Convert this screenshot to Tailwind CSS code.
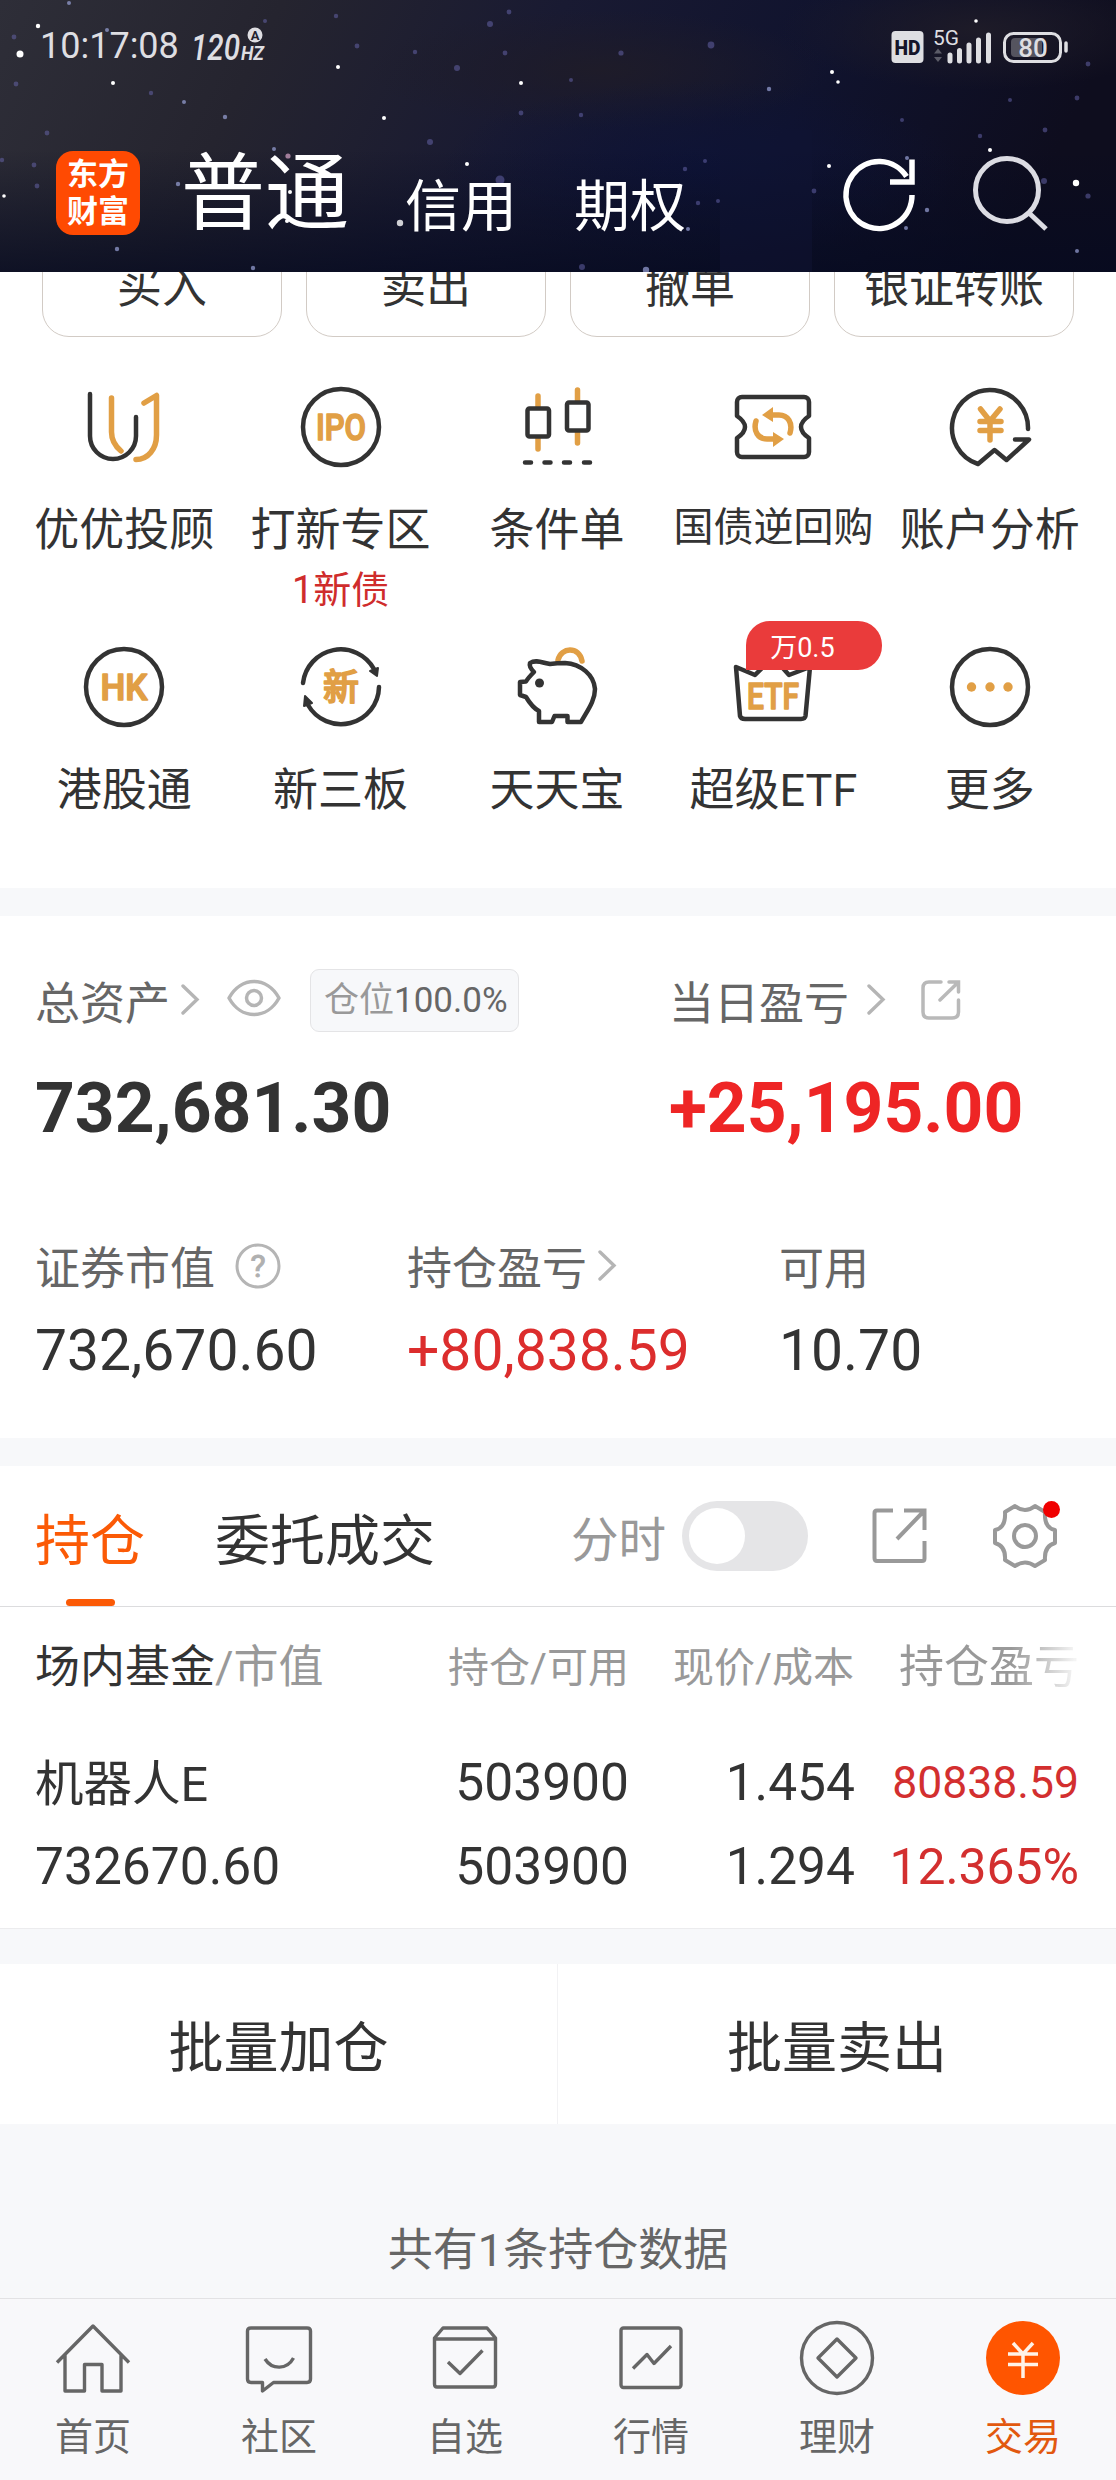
<!DOCTYPE html>
<html lang="zh-CN">
<head>
    <meta charset="UTF-8">
    <meta name="viewport" content="width=device-width, initial-scale=1.0">
    <title>交易 - 东方财富</title>
    <script src="https://cdn.jsdelivr.net/npm/@tailwindcss/browser@4"></script>
    <style>
        body { font-family: Roboto, 'Noto Sans CJK SC', sans-serif; }
        .icon { fill: none; stroke: #333; stroke-width: 4.5; stroke-linecap: round; stroke-linejoin: round; }
        .icon .o { stroke: #e19f45; stroke-width: 5.5; }
        .icon .of { fill: #e19f45; stroke: none; }
        .icon text { fill: #e19f45; stroke: #e19f45; stroke-width: 1.6; font-weight: 500; text-anchor: middle; }
        .nav { fill: none; stroke: #666; stroke-width: 3.4; stroke-linejoin: round; }
        .chev { fill: none; stroke: #b5b5b5; stroke-width: 3.4; stroke-linecap: round; }
    </style>
</head>
<body class="bg-[#f7f8fa] text-[#333] w-[1116px] h-[2480px] overflow-hidden whitespace-nowrap">

    <!-- Header -->
    <header class="relative h-[272px] overflow-hidden text-white bg-[#14152c]">
        <svg class="absolute inset-0" width="1116" height="272" viewBox="0 0 1116 272">
            <defs>
                <linearGradient id="sky" x1="0" y1="0" x2="1" y2="0.12">
                    <stop offset="0" stop-color="#2e2e38"/>
                    <stop offset="0.25" stop-color="#25242f"/>
                    <stop offset="0.5" stop-color="#191a32"/>
                    <stop offset="0.75" stop-color="#10132e"/>
                    <stop offset="1" stop-color="#0e0d1e"/>
                </linearGradient>
                <linearGradient id="shade" x1="0" y1="0" x2="0" y2="1">
                    <stop offset="0.55" stop-color="#060a20" stop-opacity="0"/>
                    <stop offset="1" stop-color="#060a20" stop-opacity="0.75"/>
                </linearGradient>
                <radialGradient id="blue"><stop offset="0" stop-color="#0d1338" stop-opacity="0.8"/><stop offset="1" stop-color="#0d1338" stop-opacity="0"/></radialGradient>
                <radialGradient id="dust"><stop offset="0" stop-color="#1f1c28" stop-opacity="0.9"/><stop offset="1" stop-color="#1f1c28" stop-opacity="0"/></radialGradient>
            </defs>
            <rect width="1116" height="272" fill="url(#sky)"/>
            <ellipse cx="600" cy="70" rx="230" ry="60" fill="url(#dust)"/>
            <ellipse cx="980" cy="30" rx="200" ry="60" fill="url(#dust)"/>
            <ellipse cx="700" cy="170" rx="260" ry="90" fill="url(#blue)"/>
            <rect width="1116" height="272" fill="url(#shade)"/>
            <rect x="720" y="130" width="92" height="142" fill="#111433" opacity="0.55"/>
            <g fill="#fff">
                <circle cx="20" cy="54" r="3.500"/><circle cx="38" cy="26" r="2.200"/><circle cx="113" cy="83" r="2"/>
                <circle cx="338" cy="67" r="2"/><circle cx="384" cy="118" r="2"/><circle cx="521" cy="83" r="2"/>
                <circle cx="467" cy="164" r="2"/><circle cx="400" cy="223" r="3.200" opacity="0.8"/><circle cx="4" cy="196" r="1.800"/>
                <circle cx="832" cy="72" r="2"/><circle cx="838" cy="82" r="1.800"/><circle cx="976" cy="21" r="1.800"/>
                <circle cx="990" cy="150" r="2"/><circle cx="1076" cy="183" r="3.200"/><circle cx="829" cy="166" r="2"/>
                <circle cx="290" cy="192" r="2"/><circle cx="287" cy="221" r="2"/>
            </g>
            <g fill="#9aa3d8" opacity="0.7">
                <circle cx="117" cy="249" r="2.200"/><circle cx="253" cy="268" r="2.200"/><circle cx="646" cy="270" r="3.200"/>
                <circle cx="769" cy="89" r="2.200"/><circle cx="927" cy="210" r="2.200"/><circle cx="1077" cy="251" r="2"/>
                <circle cx="184" cy="102" r="2"/><circle cx="225" cy="117" r="2.200"/><circle cx="107" cy="30" r="2"/>
                <circle cx="907" cy="158" r="2"/><circle cx="906" cy="228" r="2"/><circle cx="688" cy="229" r="2"/>
                <circle cx="69" cy="3" r="2"/><circle cx="274" cy="149" r="2"/><circle cx="178" cy="184" r="2.200"/>
                <circle cx="288" cy="156" r="2.600" fill="#d8a5c8"/>
            </g>
            <g fill="#6a68b0" opacity="0.5">
                <circle cx="500" cy="180" r="4.500"/><circle cx="490" cy="24" r="3"/><circle cx="509" cy="12" r="2.400"/>
                <circle cx="457" cy="68" r="3"/><circle cx="430" cy="142" r="3"/><circle cx="505" cy="53" r="2.400"/>
                <circle cx="415" cy="52" r="2.200"/><circle cx="357" cy="46" r="2.400"/><circle cx="336" cy="16" r="2.200"/>
                <circle cx="265" cy="21" r="2"/><circle cx="151" cy="93" r="2.200"/><circle cx="47" cy="133" r="2.400"/>
                <circle cx="16" cy="84" r="2.400"/><circle cx="14" cy="37" r="2.400"/><circle cx="34" cy="165" r="2.400"/>
                <circle cx="37" cy="186" r="2.400"/><circle cx="2" cy="160" r="2.200"/><circle cx="711" cy="45" r="3.400"/>
                <circle cx="621" cy="53" r="2.600"/><circle cx="571" cy="80" r="2"/><circle cx="581" cy="115" r="2.200"/>
                <circle cx="685" cy="169" r="2.200"/><circle cx="705" cy="161" r="2"/><circle cx="698" cy="203" r="2.200"/>
                <circle cx="718" cy="201" r="2"/><circle cx="814" cy="191" r="2.400"/><circle cx="1044" cy="181" r="3"/>
                <circle cx="1088" cy="196" r="2.600"/><circle cx="1088" cy="64" r="2.400"/><circle cx="1077" cy="98" r="2.400"/>
                <circle cx="1045" cy="130" r="2.400"/><circle cx="1010" cy="100" r="2"/><circle cx="902" cy="120" r="2"/>
                <circle cx="980" cy="136" r="2.200"/><circle cx="582" cy="267" r="3"/><circle cx="521" cy="113" r="2.400"/>
            </g>
        </svg>

        <div class="relative flex h-[92px] items-center pl-10 pr-[48px] text-[#dedee2]">
            <span class="text-[36px] leading-[50px]">10:17:08</span>
            <svg class="ml-[12px]" width="76" height="44" viewBox="0 0 76 44">
                <text x="0" y="35.500" font-size="37" font-style="italic" font-weight="500" textLength="49" lengthAdjust="spacingAndGlyphs" fill="#dedee2">120</text>
                <text x="50" y="35.500" font-size="20" font-style="italic" font-weight="700" textLength="23" lengthAdjust="spacingAndGlyphs" fill="#dedee2">HZ</text>
                <circle cx="64" cy="11" r="7.500" fill="#dedee2"/>
                <text x="64" y="15.500" font-size="13" font-weight="700" text-anchor="middle" fill="#22222e">A</text>
            </svg>
            <svg class="ml-auto" width="178" height="44" viewBox="0 0 178 44">
                <rect x="1.500" y="7" width="32" height="32" rx="4" fill="#dedee2"/>
                <text x="17.500" y="30.500" font-size="21" font-weight="900" text-anchor="middle" textLength="26" lengthAdjust="spacingAndGlyphs" fill="#15142a">HD</text>
                <text x="43" y="21" font-size="21" textLength="26" lengthAdjust="spacingAndGlyphs" fill="#dedee2">5G</text>
                <path d="M44 29.500l4-5 4 5zM44 33l4 5 4-5z" fill="#5c5c68"/>
                <path d="M60 31v6M69.500 26.500v10.500M79 21v16M88.500 16v21M98.500 11v26" stroke="#dedee2" stroke-width="5" stroke-linecap="round"/>
                <rect x="121" y="14" width="31" height="19" rx="4" fill="#55545f"/>
                <rect x="114.500" y="9.500" width="56" height="28" rx="9" fill="none" stroke="#dedee2" stroke-width="3"/>
                <path d="M176 19v8" stroke="#dedee2" stroke-width="3.500" stroke-linecap="round"/>
                <text x="143" y="32.500" font-size="26" font-weight="500" text-anchor="middle" fill="#dedee2">80</text>
            </svg>
        </div>

        <div class="relative flex h-[180px] items-center pl-14 pt-[22px]">
            <div class="w-[84px] h-[84px] rounded-[17px] bg-[#ff4a02] text-[31px] leading-[37px] font-bold text-center pt-[5px]">东方<br>财富</div>
            <span class="ml-[41px] pt-1 text-[84px] leading-[100px]">普通</span>
            <span class="ml-[56px] pt-7 text-[56px] leading-[70px]">信用</span>
            <span class="ml-[57px] pt-7 text-[56px] leading-[70px]">期权</span>
            <svg class="ml-[153px]" width="80" height="80" viewBox="-40 -40 80 80" fill="none" stroke="#fff" stroke-width="5.500">
                <path d="M33 2A33 33.500 0 1 1 27.500-16.500"/>
                <path d="M33-33.500V-11H11"/>
            </svg>
            <svg class="ml-[51px]" width="80" height="80" viewBox="-40 -40 80 80" fill="none" stroke="#dcdce3" stroke-width="5">
                <circle cx="-3" cy="-3" r="31.500"/>
                <path d="M19 20L36 36"/>
            </svg>
        </div>
    </header>

    <main>
        <!-- Quick trade buttons, scrolled partly under the header -->
        <div class="flex h-[65px] items-end gap-6 overflow-hidden bg-white px-[42px] text-center text-[45px] leading-[102px]">
            <div class="h-[101px] flex-1 rounded-[27px] border border-[#d2cbc5]">买入</div>
            <div class="h-[101px] flex-1 rounded-[27px] border border-[#d2cbc5]">卖出</div>
            <div class="h-[101px] flex-1 rounded-[27px] border border-[#d2cbc5]">撤单</div>
            <div class="h-[101px] flex-1 rounded-[27px] border border-[#d2cbc5]">银证转账</div>
        </div>

        <!-- Function grid -->
        <div class="grid h-[551px] grid-cols-5 auto-rows-[260px] bg-white pl-4 pr-[18px] pt-12 text-center text-[45px] leading-[60px]">
            <div class="flex flex-col items-center">
                <svg class="icon" width="84" height="84" viewBox="-42 -42 84 84">
                    <path class="o" d="M-12.500-29V5C-12.500 13-9 19-3 24"/>
                    <path class="o" d="M20-24L32.500-31.500V8C32.500 22 24 32.500 12 32.500"/>
                    <path d="M-34-33V9A23 23 0 0 0 12 9V-10"/>
                </svg>
                <span class="mt-8">优优投顾</span>
            </div>
            <div class="flex flex-col items-center">
                <svg class="icon" width="84" height="84" viewBox="-42 -42 84 84">
                    <circle r="38"/>
                    <text y="13" font-size="36" textLength="50" lengthAdjust="spacingAndGlyphs">IPO</text>
                </svg>
                <span class="mt-8">打新专区</span>
                <span class="-mt-px text-[38px] text-[#cf2c2c]">1新债</span>
            </div>
            <div class="flex flex-col items-center">
                <svg class="icon" width="84" height="84" viewBox="-42 -42 84 84">
                    <path class="o" d="M-19-31v11M-19 11v11M20.500-37v11M20.500 5v11"/>
                    <rect x="-29.500" y="-18.500" width="21.500" height="28" rx="2"/>
                    <rect x="10" y="-24.500" width="21.500" height="28" rx="2"/>
                    <path d="M-32 35.500h6M-12.500 35.500h6M7 35.500h6M27 35.500h6"/>
                </svg>
                <span class="mt-8">条件单</span>
            </div>
            <div class="flex flex-col items-center">
                <svg class="icon" width="84" height="84" viewBox="-42 -42 84 84">
                    <path d="M-31-30H31a5 5 0 0 1 5 5V-11C30-7 28-4 28 0S30 7 36 11V25a5 5 0 0 1-5 5H-31a5 5 0 0 1-5-5V11C-30 7-28 4-28 0S-30-7-36-11V-25a5 5 0 0 1 5-5Z"/>
                    <path class="o" d="M0-12H6C15-12 20-4 17 6M0 12H-6C-15 12-20 4-17-6"/>
                    <path class="of" d="M-11-12L0-20V-5ZM11 12L0 20V5Z"/>
                </svg>
                <span class="mt-8 text-[40px] leading-[53px]">国债逆回购</span>
            </div>
            <div class="flex flex-col items-center">
                <svg class="icon" width="84" height="84" viewBox="-42 -42 84 84">
                    <path d="M38 2A38 38 0 1 0-12 37L4.500 23L16.500 33L39 12.500H25"/>
                    <path class="o" d="M-9.500-18L0-6L10-18M0-6V13M-10-5.500H11M-10 3.500H11" stroke-width="4.500"/>
                </svg>
                <span class="mt-8">账户分析</span>
            </div>
            <div class="flex flex-col items-center">
                <svg class="icon" width="84" height="84" viewBox="-42 -42 84 84">
                    <circle r="38"/>
                    <text y="13" font-size="36" textLength="47" lengthAdjust="spacingAndGlyphs">HK</text>
                </svg>
                <span class="mt-8">港股通</span>
            </div>
            <div class="flex flex-col items-center">
                <svg class="icon" width="84" height="84" viewBox="-42 -42 84 84">
                    <path d="M-38-4A38 38 0 0 1 33-18M38 0A38 38 0 0 1-33 18"/>
                    <path d="M29-16L37-19L36-11ZM-29 16L-37 19L-36 9Z" fill="#333" stroke-width="2"/>
                    <text y="13" font-size="36">新</text>
                </svg>
                <span class="mt-8">新三板</span>
            </div>
            <div class="flex flex-col items-center">
                <svg class="icon" width="84" height="84" viewBox="-42 -42 84 84">
                    <path class="o" d="M1-27C4-40 22-41 25-26"/>
                    <path d="M-27-24C-21-28-14-24-7-23C0-24 5-24 8-24C24-23 37-12 38 2C38 14 30 24 24 35H10.500V29H-2.500L-5 35H-18V24C-24 21-28 15-31 10L-37 8V-5L-31-5.500C-29-9-26-12-23-15C-26-18-28-21-27-24Z"/>
                    <circle cx="-17.500" cy="-4" r="4.500" fill="#333" stroke="none"/>
                </svg>
                <span class="mt-8">天天宝</span>
            </div>
            <div class="relative flex flex-col items-center">
                <svg class="icon" width="84" height="84" viewBox="-42 -42 84 84">
                    <path d="M-37-20L-18-12L0-30L16-12L37-20L32.500 29Q32 32 28 32H-28Q-32 32-33 29Z"/>
                    <text y="21.500" font-size="36" textLength="52" lengthAdjust="spacingAndGlyphs">ETF</text>
                </svg>
                <div class="absolute left-[81px] -top-6 h-[49px] w-[136px] rounded-[24px] rounded-bl-none bg-[#ea3b3b] pl-6 text-left text-[27px] leading-[55px] text-white">万0.5</div>
                <span class="mt-8">超级ETF</span>
            </div>
            <div class="flex flex-col items-center">
                <svg class="icon" width="84" height="84" viewBox="-42 -42 84 84">
                    <circle r="38"/>
                    <g class="of"><circle cx="-18.500" r="4.700"/><circle r="4.700"/><circle cx="18" r="4.700"/></g>
                </svg>
                <span class="mt-8">更多</span>
            </div>
        </div>

        <!-- Assets -->
        <section class="mt-7 h-[522px] bg-white px-[35px] pt-11 text-[45px] text-[#666]">
            <div class="grid grid-cols-[634px_1fr]">
                <div class="flex h-20 items-center">
                    <span class="pt-2.5 leading-[60px]">总资产</span>
                    <svg class="chev ml-2.5" width="20" height="32" viewBox="0 0 20 32"><path d="M3 2L17 15.500L3 29"/></svg>
                    <svg class="ml-[27px] mb-1" width="54" height="40" viewBox="0 0 54 40" fill="none" stroke="#b5b5b5" stroke-width="3.500"><path d="M2 20C14-2 40-2 52 20C40 42 14 42 2 20Z" stroke-linejoin="round"/><circle cx="27" cy="20" r="7.500"/></svg>
                    <div class="ml-[29px] h-[63px] w-[209px] rounded-[9px] border border-[#e4e4e6] bg-[#f7f8fa] pl-[13px] text-[35px] leading-[61px]"><span class="text-[#999]">仓位</span>100.0%</div>
                </div>
                <div class="flex h-20 items-center">
                    <span class="pt-2.5 leading-[60px]">当日盈亏</span>
                    <svg class="chev ml-[17px]" width="20" height="32" viewBox="0 0 20 32"><path d="M3 2L17 15.500L3 29"/></svg>
                    <svg class="ml-[34px]" width="42" height="42" viewBox="0 0 42 42" fill="none" stroke="#b9b9b9" stroke-width="3.500" stroke-linecap="round"><path d="M21 3H9Q3 3 3 9V33Q3 39 9 39H32Q38.500 39 38.500 33V21M29 3H38.500V13M38 3.500L20 21"/></svg>
                </div>
            </div>
            <div class="mt-6 grid grid-cols-[634px_1fr] text-[69.500px] font-bold leading-[90px]">
                <span class="text-[#333]">732,681.30</span>
                <span class="text-[#ee2525]">+25,195.00</span>
            </div>
            <div class="mt-[78px] grid h-[60px] grid-cols-[372px_372px_1fr] leading-[60px]">
                <div class="flex items-center">
                    <span class="pt-2">证券市值</span>
                    <svg class="ml-5" width="46" height="48" viewBox="-23 -24 46 48"><circle r="21" fill="none" stroke="#b5b5b5" stroke-width="3"/><text y="11" font-size="32" text-anchor="middle" fill="#b0b0b0" stroke="#b0b0b0">?</text></svg>
                </div>
                <div class="flex items-center">
                    <span class="pt-2">持仓盈亏</span>
                    <svg class="chev ml-2.5" width="20" height="32" viewBox="0 0 20 32"><path d="M3 2L17 15.500L3 29"/></svg>
                </div>
                <div class="flex items-center"><span class="pt-2">可用</span></div>
            </div>
            <div class="mt-6 grid grid-cols-[372px_372px_1fr] text-[57px] leading-[70px] text-[#333]">
                <span>732,670.60</span>
                <span class="text-[#dc2d2d]">+80,838.59</span>
                <span>10.70</span>
            </div>
        </section>

        <!-- Positions -->
        <section class="mt-7 h-[463px] border-b border-[#ececee] bg-white">
            <div class="flex h-[141px] items-center border-b border-[#dcdcde] pl-[35px] text-[55px] leading-[70px]">
                <div class="relative flex h-full items-center text-[#fb5a06]">
                    <span class="pt-2.5">持仓</span>
                    <span class="absolute bottom-0 left-[31px] h-[7px] w-[49px] rounded-full bg-[#fb5a06]"></span>
                </div>
                <span class="ml-[70px] pt-2.5">委托成交</span>
                <span class="ml-[136px] pt-2.5 text-[47.500px] text-[#999]">分时</span>
                <div class="ml-4 h-[70px] w-[126px] rounded-full bg-[#e5e5e7] p-[7px]"><div class="size-14 rounded-full bg-white"></div></div>
                <svg class="ml-16" width="56" height="56" viewBox="0 0 56 56" fill="none" stroke="#999" stroke-width="4"><path d="M21 2.500H5Q2.500 2.500 2.500 5V50Q2.500 53 5 53H50Q52.500 53 52.500 50.500V33M32 2.500H52.500V22M52 3L25 31"/></svg>
                <svg class="ml-[61px]" width="72" height="72" viewBox="-36 -36 72 72" fill="none" stroke="#999" stroke-width="4" stroke-linejoin="round">
                    <path d="M-10-30Q0-22 10-30L20-24Q19-8 30-6V7Q19 10 20 24L10 30Q0 23-10 30L-20 24Q-19 10-30 7V-6Q-19-8-20-24Z"/>
                    <circle r="11"/>
                    <circle cx="26.500" cy="-26.500" r="8.500" fill="#f00000" stroke="none"/>
                </svg>
            </div>
            <div class="grid h-[122px] grid-cols-[368px_226px_225px_225px] items-center pl-[35px] text-right text-[41px] text-[#999]">
                <span class="text-left text-[45px]"><span class="text-[#333]">场内基金</span>/市值</span>
                <span class="pt-0.5">持仓/可用</span>
                <span class="pt-0.5">现价/成本</span>
                <span class="bg-linear-to-r from-[#999] from-70% to-[#f4f4f4] to-98% bg-clip-text text-[45px] text-transparent">持仓盈亏</span>
            </div>
            <div class="mt-3 grid grid-cols-[368px_226px_226px_224px] items-center pl-[35px] text-right text-[51.500px] leading-[84px]">
                <span class="pt-1 text-left text-[48.500px] leading-[80px]">机器人E</span>
                <span>503900</span>
                <span>1.454</span>
                <span class="text-[44.500px] text-[#d32f2f]">80838.59</span>
                <span class="text-left">732670.60</span>
                <span>503900</span>
                <span>1.294</span>
                <span class="text-[49.800px] text-[#d32f2f]">12.365%</span>
            </div>
        </section>

        <div class="mt-[35px] grid h-[160px] grid-cols-2 bg-white text-[55px]">
            <div class="flex items-center justify-center border-r border-[#f2f2f4] pt-2">批量加仓</div>
            <div class="flex items-center justify-center pt-2">批量卖出</div>
        </div>

        <div class="flex h-[174px] items-center justify-center pt-20 text-[45px] text-[#666]">共有1条持仓数据</div>
    </main>

    <!-- Tab bar -->
    <nav class="grid h-[182px] grid-cols-6 border-t border-[#e2e2e4] bg-[#f8f8fa] pt-[17px] text-center text-[38px] leading-[48px] text-[#666]">
        <div class="flex flex-col items-center gap-[13px]">
            <svg class="nav" width="84" height="84" viewBox="-42 -42 84 84"><path d="M-36 4.500L0-32L36 4.500M-28-3V33H-8.500V6.500H9V33H28V-3"/></svg>
            <span>首页</span>
        </div>
        <div class="flex flex-col items-center gap-[13px]">
            <svg class="nav" width="84" height="84" viewBox="-42 -42 84 84"><path d="M-28-30H28Q31.500-30 31.500-27V21Q31.500 24.500 28 24.500H-5.500L-16.500 33V24.500H-28Q-31.500 24.500-31.500 21V-27Q-31.500-30-28-30ZM-14 1C-7 12 8 12 14.500 0"/></svg>
            <span>社区</span>
        </div>
        <div class="flex flex-col items-center gap-[13px]">
            <svg class="nav" width="84" height="84" viewBox="-42 -42 84 84"><path d="M-30.500-20L-22-30H22L30.500-20V26Q30.500 29 28 29H-28Q-30.500 29-30.500 26ZM-30.500-19H30.500M-17 4L-5 15.500L17.500-7.500"/></svg>
            <span>自选</span>
        </div>
        <div class="flex flex-col items-center gap-[13px]">
            <svg class="nav" width="84" height="84" viewBox="-42 -42 84 84"><rect x="-30" y="-30" width="60" height="59.500" rx="2.500"/><path d="M-18 10.500L-4-3.500L3 5.500L20-12"/></svg>
            <span>行情</span>
        </div>
        <div class="flex flex-col items-center gap-[13px]">
            <svg class="nav" width="84" height="84" viewBox="-42 -42 84 84"><circle r="35.500"/><path d="M0-19L19 0L0 19L-19 0Z"/></svg>
            <span>理财</span>
        </div>
        <div class="flex flex-col items-center gap-[13px] text-[#e2580f]">
            <svg width="84" height="84" viewBox="-42 -42 84 84"><circle r="37" fill="#ff5500"/><path d="M-10-15L0-4L10-15M0-4V20M-15-4H15M-15 6.500H15" fill="none" stroke="#fff2e6" stroke-width="3.500"/></svg>
            <span>交易</span>
        </div>
    </nav>
</body>
</html>
